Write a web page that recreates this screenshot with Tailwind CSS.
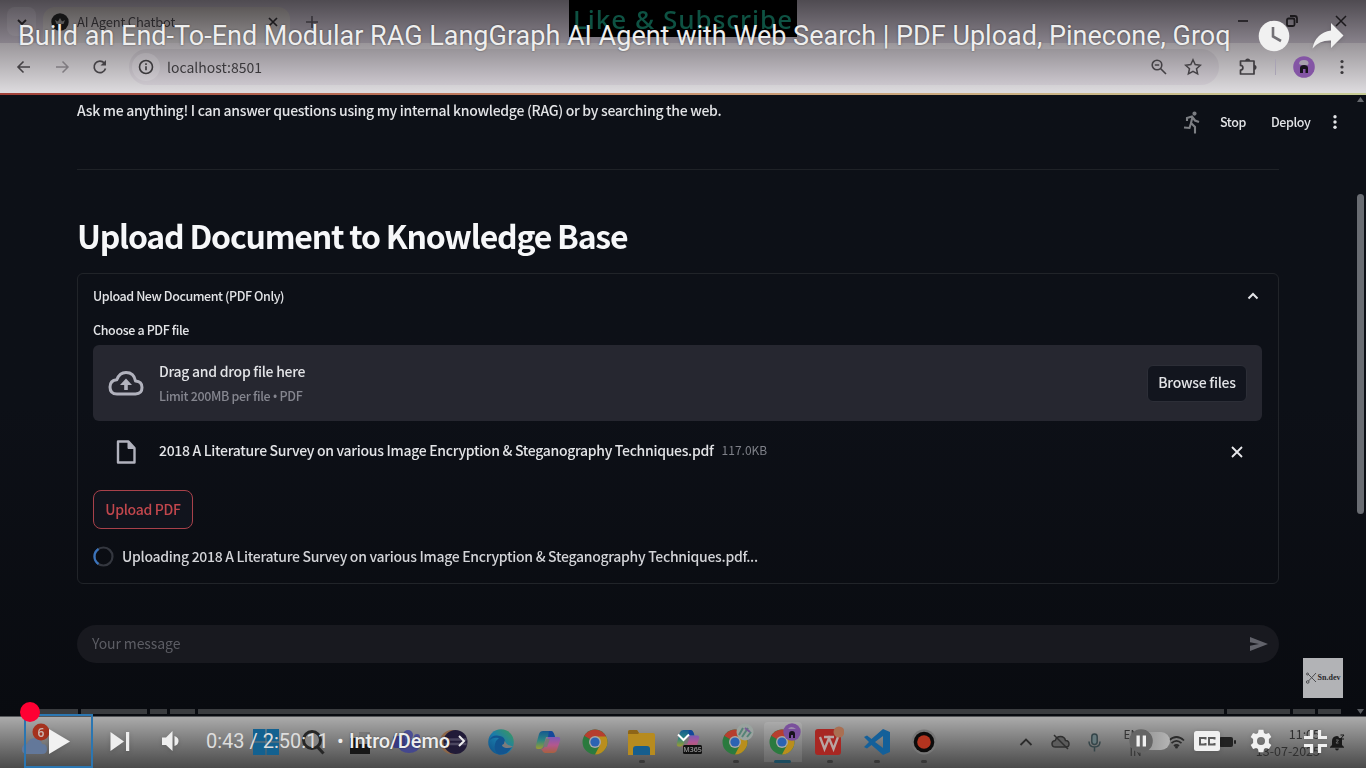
<!DOCTYPE html>
<html lang="en">
<head>
<meta charset="utf-8">
<title>Build an End-To-End Modular RAG LangGraph AI Agent</title>
<script src="https://cdn.jsdelivr.net/npm/@tailwindcss/browser@4"></script>
</head>
<body class="bg-black">
<svg width="0" height="0" class="absolute">
  <defs>
    <linearGradient id="cpl" x1="0" y1="0" x2="0" y2="1"><stop offset="0" stop-color="#15598f"/><stop offset=".5" stop-color="#2c8583"/><stop offset="1" stop-color="#9c9b31"/></linearGradient>
    <linearGradient id="cpr" x1="0" y1="0" x2="0" y2="1"><stop offset="0" stop-color="#7d5ab4"/><stop offset=".5" stop-color="#b3578f"/><stop offset="1" stop-color="#a8603f"/></linearGradient>
    <linearGradient id="edge" x1="0" y1="1" x2="1" y2="0"><stop offset="0" stop-color="#0e4c85"/><stop offset=".5" stop-color="#1a7cab"/><stop offset="1" stop-color="#3f9c55"/></linearGradient>
    <symbol id="chrome" viewBox="0 0 26 26">
      <circle cx="13" cy="13" r="12.500" fill="#2b7a3e"/>
      <path d="M13 13 2.200 6.800A12.500 12.500 0 0 1 23.800 6.800L23 9H13Z" fill="#b63e2f"/>
      <path d="M13 13V7.500H24.200A12.500 12.500 0 0 1 13 25.500L18 16Z" fill="#b98e1d"/>
      <circle cx="13" cy="13" r="6" fill="#a9a9a9"/><circle cx="13" cy="13" r="4.600" fill="#2b63b3"/>
    </symbol>
    <symbol id="copilot" viewBox="0 0 26 24">
      <path d="M8 1h8q2 0 3 3l1 3h-5l-4 0-3 10q-1 2-3 2H3q-3 0-2-4L4 4q1-3 4-3Z" fill="url(#cpl)"/>
      <path d="M14 1h2q2 0 3 3l1 3h-7Z" fill="#14489b"/>
      <path d="M18 23h-8q-2 0-3-3l-1-1q3 0 4-3l3-9h10q3 0 2 4l-3 9q-1 3-4 3Z" fill="url(#cpr)"/>
      <path d="m11 9 4 0-3 8h-3Z" fill="#777"/>
    </symbol>
  </defs>
</svg>

<main class="relative h-[768px] w-[1366px] overflow-hidden bg-[#0b0e15] font-['Noto_Sans_CJK_SC',sans-serif]">

  <!-- Recorded desktop -->
  <div class="flex h-full flex-col blur-[0.4px]">

    <!-- Tab strip -->
    <div class="flex h-[43px] shrink-0 bg-linear-to-b from-[#4f4b51] to-[#88828b] pt-[7px]">
      <div class="ml-[7px] flex h-[29px] w-[29px] items-center justify-center rounded-lg bg-white/5">
        <svg class="h-3 w-3" viewBox="0 0 12 12" fill="none" stroke="#1b191c" stroke-width="1.800"><path d="m2 4 4 4 4-4"/></svg>
      </div>
      <div class="ml-[7px] flex h-9 w-[247px] items-center rounded-t-xl bg-linear-to-b from-[#5d5959] to-[#918e90] pb-1.5 pl-2">
        <svg class="h-[18px] w-[18px]" viewBox="0 0 18 18"><circle cx="9" cy="9" r="8.700" fill="#151516"/><path d="m4 7 3 1.500L9 5l2 3.500L14 7l-1.500 4h-7Z" fill="#5a5858"/></svg>
        <span class="ml-[8px] w-[170px] whitespace-nowrap text-[13px] leading-5 tracking-[-0.2px] text-[#29272a]">AI Agent Chatbot</span>
        <svg class="ml-5 h-3 w-3" viewBox="0 0 12 12" fill="none" stroke="#1b191c" stroke-width="1.700"><path d="m2 2 8 8M10 2l-8 8"/></svg>
      </div>
      <svg class="mt-2 ml-[15px] h-[14px] w-[14px]" viewBox="0 0 14 14" fill="none" stroke="#37343a" stroke-width="1.600"><path d="M7 1v12M1 7h12"/></svg>
      <div class="-mt-[7px] ml-[250px] flex h-[37px] w-[228px] items-center justify-center bg-black font-['Noto_Sans',sans-serif] text-[26px] leading-9 font-medium tracking-[1px] whitespace-nowrap text-[#0e5243]">Like &amp; Subscribe</div>
      <div class="ml-auto flex h-7 items-center gap-[37px] pr-[19px]">
        <svg class="h-3 w-3" viewBox="0 0 12 12" stroke="#1b191c" stroke-width="1.600"><path d="M1 6h10"/></svg>
        <svg class="h-3 w-3" viewBox="0 0 12 12" fill="none" stroke="#1b191c" stroke-width="1.800"><rect x="1" y="3.500" width="7.500" height="7.500" rx="1.500"/><path d="M4 1h4.500q2.500 0 2.500 2.500V8"/></svg>
        <svg class="h-3 w-3" viewBox="0 0 12 12" fill="none" stroke="#1b191c" stroke-width="1.500"><path d="m1 1 10 10M11 1 1 11"/></svg>
      </div>
    </div>

    <!-- Address bar -->
    <div class="flex h-[50px] shrink-0 items-center bg-linear-to-b from-[#9a969a] to-[#dedcdf] pb-[2px] pl-[16px] text-[#3a383b]">
      <svg class="h-4 w-4" viewBox="0 0 16 16" fill="none" stroke="#444145" stroke-width="1.600"><path d="M14 8H2M7.500 2.500 2 8l5.500 5.500"/></svg>
      <svg class="ml-[22px] h-4 w-4" viewBox="0 0 16 16" fill="none" stroke="#7f7b80" stroke-width="1.500"><path d="M2 8h12M8.500 2.500 14 8l-5.500 5.500"/></svg>
      <svg class="ml-[22px] h-4 w-4" viewBox="0 0 16 16" fill="none" stroke="#444145" stroke-width="1.700"><path d="M13.500 9.500A5.800 5.800 0 1 1 12.300 4"/><path d="M14 1v5.500H8.500Z" fill="#444145" stroke="none"/></svg>
      <div class="ml-[21px] flex h-9 w-[1090px] items-center rounded-full bg-linear-to-b from-[#989499] to-[#cbc6cd] pl-[3px]">
        <div class="flex h-7 w-7 items-center justify-center rounded-full bg-white/12">
          <svg class="h-4 w-4" viewBox="0 0 16 16" fill="none" stroke="#3a383b" stroke-width="1.600"><circle cx="8" cy="8" r="6.500"/><path d="M8 7.200v4M8 4.300v1.700"/></svg>
        </div>
        <span class="ml-[7px] text-[14px] leading-5">localhost:8501</span>
        <svg class="ml-auto h-[18px] w-[18px]" viewBox="0 0 18 18" fill="none" stroke="#444145" stroke-width="1.600"><circle cx="7" cy="7" r="4.800"/><path d="m10.500 10.500 5.500 5.500M4.800 7h4.400"/></svg>
        <svg class="mr-[17px] ml-[16px] h-[18px] w-[18px]" viewBox="0 0 18 18" fill="none" stroke="#444145" stroke-width="1.500"><path d="m9 1.800 2.200 4.800 5.200.6-3.900 3.500 1.100 5.200L9 13.300l-4.600 2.600 1.100-5.200-3.900-3.500 5.200-.6Z"/></svg>
      </div>
      <svg class="ml-[19px] h-5 w-5" viewBox="0 0 20 20" fill="none" stroke="#3f3c40" stroke-width="1.700" stroke-linejoin="round"><path d="M2.500 4H16v13H2.500v-4c3.200 0 3.200-4.600 0-4.600Z"/><path d="M8 4a1.700 1.700 0 0 1 3.400 0M16 8.500a1.700 1.700 0 0 1 0 3.400" fill="#3f3c40"/></svg>
      <div class="ml-[17px] h-4 w-px bg-[#a9a3b4]"></div>
      <svg class="ml-[17px] h-[22px] w-[22px]" viewBox="0 0 22 22"><circle cx="11" cy="11" r="10.800" fill="#8455a5"/><path d="M6 8q0-4 5-4t4.500 4q-1 2-4.500 1.500T6 8Z" fill="#a7a0ad"/><path d="M7 16v-4q0-3 4-3t4 3v5h-2.500v-4h-2.500v4H7Z" fill="#17131c"/></svg>
      <svg class="ml-[19px] h-4 w-4" viewBox="0 0 16 16" fill="#3a383b"><circle cx="8" cy="2.500" r="1.600"/><circle cx="8" cy="8" r="1.600"/><circle cx="8" cy="13.500" r="1.600"/></svg>
    </div>
    <div class="h-[2px] shrink-0 bg-linear-to-r from-[#a04038] via-[#c99370] to-[#c8cd96]"></div>

    <!-- Application page -->
    <div class="flex h-[621px] shrink-0 bg-linear-to-b from-[#0d1017] via-[#0d1017] to-[#090b10]">
      <div class="ml-[77px] w-[1202px] shrink-0 text-[#e3e4e7]">
        <div class="flex h-[75px] justify-between border-b border-[#1f2227]">
          <p class="pt-[4px] text-[14px] leading-[22px] font-medium tracking-[-0.29px] whitespace-nowrap">Ask me anything! I can answer questions using my internal knowledge (RAG) or by searching the web.</p>
        </div>
        <h1 class="mt-[41px] h-[48px] text-[32px] leading-[48px] font-bold tracking-[-1.22px] whitespace-nowrap text-[#f6f7f9]">Upload Document to Knowledge Base</h1>

        <section class="mt-[14px] h-[311px] rounded-md border border-[#212429] pr-[16px] pl-[15px]">
          <div class="flex h-[43px] items-center justify-between pr-[3px]">
            <span class="text-[12.500px] leading-5 font-medium tracking-[-0.43px]">Upload New Document (PDF Only)</span>
            <svg class="h-[12px] w-[12px]" viewBox="0 0 12 12" fill="none" stroke="#e3e4e7" stroke-width="2"><path d="m1.500 8.500 4.500-4.500 4.500 4.500"/></svg>
          </div>
          <div class="h-[28px] text-[12.500px] leading-[25px] font-medium tracking-[-0.38px]">Choose a PDF file</div>
          <div class="flex h-[76px] items-center rounded-md bg-[#262730] pr-[15px] pl-[15px]">
            <svg class="h-[28px] w-[36px]" viewBox="0 0 36 28" fill="none" stroke="#b1b2bd" stroke-width="3" stroke-linejoin="round"><path d="M9 25q-7 0-7-7 0-6.500 6.800-7.200Q11.500 3.500 18 3.500q8 0 9.500 8.500 6.500.3 6.500 6.500T27.500 25Z"/><path d="m18 9.500 6 6.500h-4.200v5h-3.600v-5H12Z" fill="#b1b2bd" stroke="none"/></svg>
            <div class="ml-[15px] pt-[2px]">
              <div class="text-[14px] leading-[24px] font-medium tracking-[-0.27px]">Drag and drop file here</div>
              <div class="text-[12.500px] leading-[25px] font-medium tracking-[-0.35px] text-[#85868f]">Limit 200MB per file <span class="font-['Noto_Sans',sans-serif]">•</span> PDF</div>
            </div>
            <div class="ml-auto flex h-[37px] w-[100px] items-center justify-center rounded-md border border-[#2c2e37] bg-[#12151e] pb-[2px] text-[14px] font-medium tracking-[-0.25px]">Browse files</div>
          </div>
          <div class="flex h-[62px] items-center pr-[18px] pl-[23px]">
            <svg class="h-[24px] w-[20px]" viewBox="0 0 20 24" fill="none" stroke="#b1b2bd" stroke-width="2.400" stroke-linejoin="round"><path d="M2 1.500h10.500L18.500 8v14.500H2Z"/><path d="M12 2v6.500h6.500Z" fill="#b1b2bd" stroke-width="1"/></svg>
            <span class="mb-[4px] ml-[23px] text-[14px] leading-6 font-medium tracking-[-0.3px] whitespace-nowrap">2018 A Literature Survey on various Image Encryption &amp; Steganography Techniques.pdf</span>
            <span class="mb-[4px] ml-2 text-[12px] leading-6 text-[#7e8088]">117.0KB</span>
            <svg class="ml-auto h-[14px] w-[14px]" viewBox="0 0 14 14" fill="none" stroke="#e8e9ec" stroke-width="1.800"><path d="m2 2 10 10M12 2 2 12"/></svg>
          </div>
          <div class="mt-[7px] flex h-[39px] w-[100px] items-center justify-center rounded-lg border border-[#a8414a] bg-[#11141d] pb-px text-[14px] font-medium tracking-[-0.3px] text-[#c2474d]">Upload PDF</div>
          <div class="mt-[15px] flex h-6 items-center">
            <svg class="h-[21px] w-[21px]" viewBox="0 0 21 21" fill="none" stroke-width="2.200"><circle cx="10.500" cy="10.500" r="9" stroke="#34373f"/><path d="M5.500 3A9 9 0 0 0 5.500 18" stroke="#3a74bd"/></svg>
            <span class="mb-px ml-[8px] text-[14px] leading-6 font-medium tracking-[-0.29px] whitespace-nowrap text-[#d3d4d8]">Uploading 2018 A Literature Survey on various Image Encryption &amp; Steganography Techniques.pdf...</span>
          </div>
        </section>

        <div class="mt-[41px] flex h-[38px] items-center justify-between rounded-full bg-[#18191f] pr-[11px] pl-[15px]">
          <span class="pb-[2px] text-[14px] tracking-[-0.1px] text-[#5d5e65]">Your message</span>
          <svg class="h-[14px] w-[18px]" viewBox="0 0 18 14" fill="#62636b"><path d="M0 0 18 7 0 14V8.800L9 7 0 5.200Z"/></svg>
        </div>
      </div>
      <!-- Run status and page scrollbar -->
      <div class="-ml-[96px] flex h-[54px] w-[162px] shrink-0 items-center text-[12.500px] font-medium tracking-[-0.4px] text-[#e3e4e7]">
        <svg class="h-[23px] w-[18px]" viewBox="0 0 18 23" fill="none" stroke="#7d7f84" stroke-width="2.100"><circle cx="11.500" cy="2.600" r="1.500" fill="#7d7f84" stroke-width="1.200"/><path d="M4 10V7l5-1.500 3 4 4 1.500M9.500 6 8 12l4 4v6.500M8 12l-1.500 5L1 16.500"/></svg>
        <span class="ml-[19px]">Stop</span>
        <span class="ml-[25px]">Deploy</span>
        <svg class="ml-[17px] h-4 w-4 shrink-0" viewBox="0 0 16 16" fill="#e3e4e7"><circle cx="8" cy="2.800" r="1.700"/><circle cx="8" cy="8" r="1.700"/><circle cx="8" cy="13.200" r="1.700"/></svg>
      </div>
      <div class="mr-px ml-auto flex w-[10px] shrink-0 flex-col items-center">
        <svg class="mt-[2px] h-[5px] w-[7px] shrink-0" viewBox="0 0 7 5"><path d="m3.500 0 3.500 5H0Z" fill="#65686d"/></svg>
        <div class="mt-[92px] h-[320px] w-[7px] shrink-0 rounded-full bg-[#696c72]"></div>
        <svg class="mt-auto mb-[2px] h-[5px] w-[7px] shrink-0" viewBox="0 0 7 5"><path d="M0 0h7L3.500 5Z" fill="#5a5d62"/></svg>
      </div>
    </div>

    <!-- Windows taskbar -->
    <div class="flex h-[52px] shrink-0 border-t border-[#55575a] bg-linear-to-b from-[#ababab] to-[#4a4a4a]">
      <div class="flex w-[242px] shrink-0">
        <svg class="mt-[5px] ml-[21px] h-[38px] w-[32px]" viewBox="0 0 32 38"><path d="M5 32q-5-1-4-6 1-4 5-4 2-6 8-6 6 1 7 6 5 0 5 5t-5 5Z" fill="#63789a"/><circle cx="20" cy="10" r="8.500" fill="#a5321e"/><text x="20" y="14.500" text-anchor="middle" font-family="Noto Sans" font-size="12" font-weight="600" fill="#c9b3ad">6</text></svg>
      </div>
      <div class="flex h-[50px] items-center">
        <div class="flex w-[47px] justify-center"><svg class="h-[26px] w-[26px]" viewBox="0 0 26 26" fill="#136190"><path d="M0 0h12.500v12.500H0ZM13.500 0H26v12.500H13.500ZM0 13.500h12.500V26H0ZM13.500 13.500H26V26H13.500Z"/></svg></div>
        <div class="flex w-[47px] justify-center"><svg class="h-[25px] w-[24px]" viewBox="0 0 24 25" fill="none" stroke="#262626" stroke-width="3"><circle cx="11" cy="10" r="8.500" fill="#858585"/><path d="m16.500 17 6 6.500"/></svg></div>
        <div class="flex w-[47px] justify-center"><svg class="h-[24px] w-[20px]" viewBox="0 0 20 24"><path d="M0 8h20v16H0Z" fill="#171717"/><path d="M9 2h11v12H9Z" fill="#777"/></svg></div>
        <div class="flex w-[47px] justify-center"><svg class="h-[24px] w-[28px]" viewBox="0 0 28 24"><circle cx="15" cy="5" r="5" fill="#4c4f96"/><circle cx="24" cy="7" r="3" fill="#4c4f96"/><path d="M5 9h22v7q-2 7-11 7T5 16Z" fill="#44478e"/><rect x="0" y="6" width="12" height="12" rx="2" fill="#383b85"/></svg></div>
        <div class="flex w-[47px] justify-center"><svg class="h-[26px] w-[28px]" viewBox="0 0 28 26"><circle cx="12" cy="13" r="12" fill="#8d6748"/><circle cx="15.500" cy="13" r="12" fill="#211b38"/><path d="M4.500 10.500h22M4.500 15h22" stroke="#4b465f" stroke-width="2.500"/></svg></div>
        <div class="flex w-[47px] justify-center"><svg class="h-[26px] w-[26px]" viewBox="0 0 26 26"><circle cx="13" cy="13" r="12.800" fill="url(#edge)"/><path d="M1 12Q4 5 12 7q5 1 5 6-1 2-2 3 1 3 5 2.500l4-1Q20 26 11 25.500 5 22 7 15q1-4 4-6Q4 8 1 12Z" fill="#125590"/><path d="M25 17.500q-3 2-7 1.500-4-1-4-3 3-1 2.500-4.500Q19 17 25 17.500Z" fill="#7c7c7c"/></svg></div>
        <div class="flex w-[47px] justify-center"><svg class="h-[24px] w-[26px]"><use href="#copilot"/></svg></div>
        <div class="flex w-[47px] justify-center"><svg class="h-[26px] w-[26px]"><use href="#chrome"/></svg></div>
        <div class="flex w-[47px] flex-col items-center pt-[8px]"><svg class="h-[25px] w-[27px]" viewBox="0 0 27 25"><path d="M0 2q0-2 2-2h7l2 3h14q2 0 2 2v20H0Z" fill="#b78b1f"/><path d="M0 2q0-2 2-2h7l2 3-1 1H0Z" fill="#8e6517"/><path d="M5 25v-6q0-3 3-3h11q3 0 3 3v6Z" fill="#165e8e"/></svg><span class="mt-[5px] h-[3px] w-[6px] rounded-full bg-[#383838]"></span></div>
        <div class="flex w-[47px] justify-center"><svg class="h-[26px] w-[28px]" viewBox="0 0 28 26"><use href="#copilot" x="0" y="0" width="26" height="22"/><rect x="8" y="16" width="19" height="9" rx="1.500" fill="#111"/><text x="17.500" y="23.200" text-anchor="middle" font-family="Noto Sans" font-size="7" font-weight="600" fill="#8e8e8e">M365</text></svg></div>
        <div class="flex w-[47px] flex-col items-center pt-[2px] pl-[4px]"><svg class="h-[32px] w-[32px]" viewBox="0 0 32 32"><use href="#chrome" x="0" y="6" width="26" height="26"/><circle cx="23" cy="9" r="8.500" fill="#9aa39f"/><path d="m17 12 4-7M20 14l6-9M25 14l4-5" stroke="#558377" stroke-width="2"/><path d="m23 5 5 4" stroke="#765a95" stroke-width="2"/></svg><span class="mt-[5px] mr-[4px] h-[3px] w-[6px] rounded-full bg-[#383838]"></span></div>
        <div class="flex w-[47px] flex-col items-center"><div class="flex h-[40px] w-[38px] flex-col items-center rounded-t bg-white/10 pt-[1px]"><svg class="ml-[5px] h-[32px] w-[32px] shrink-0" viewBox="0 0 32 32"><use href="#chrome" x="0" y="6" width="26" height="26"/><circle cx="23" cy="9" r="8.700" fill="#7a509c"/><path d="M20 15v-4q0-3 3-3t3 3v4h-2v-3h-2v3Z" fill="#17131c"/><path d="M19 6q3-4 8 0Z" fill="#9c8cab"/></svg><span class="mt-[5px] h-[3px] w-[17px] shrink-0 rounded-full bg-[#1d4c5f]"></span></div></div>
        <div class="flex w-[47px] flex-col items-center pt-[5px]"><svg class="h-[29px] w-[29px]" viewBox="0 0 29 29"><rect x="0" y="3" width="26" height="26" rx="3" fill="#a82723"/><path d="m5 11 4.500 12L14 12l4.500 11L23 11M9 11h10" fill="none" stroke="#b9a5a3" stroke-width="2.300"/><circle cx="24" cy="6" r="5.500" fill="#a96f52"/></svg><span class="mt-[5px] h-[3px] w-[6px] rounded-full bg-[#383838]"></span></div>
        <div class="flex w-[47px] flex-col items-center pt-[8px]"><svg class="h-[26px] w-[26px]" viewBox="0 0 26 26"><path d="M19 0 7.500 10 3 6.500 0 8l5 5-5 5 3 1.500L7.500 16 19 26l7-3V3Zm0 7v12l-8-6Z" fill="#14609a"/></svg><span class="mt-[5px] h-[3px] w-[6px] rounded-full bg-[#383838]"></span></div>
        <div class="flex w-[47px] flex-col items-center pt-[8px]"><svg class="h-[26px] w-[26px]" viewBox="0 0 26 26"><circle cx="13" cy="13" r="12.500" fill="#777"/><circle cx="13" cy="13" r="10.300" fill="#0c0b0b"/><circle cx="13" cy="13" r="6.800" fill="#b3341f"/></svg><span class="mt-[5px] h-[3px] w-[6px] rounded-full bg-[#383838]"></span></div>
      </div>
      <div class="ml-auto flex h-[50px] shrink-0 items-center pr-[21px]">
        <svg class="h-3 w-[14px]" viewBox="0 0 14 12" fill="none" stroke="#2c2c2c" stroke-width="1.800"><path d="m1.500 9 5.500-5.500L12.500 9"/></svg>
        <svg class="ml-[18px] h-[16px] w-[19px]" viewBox="0 0 19 16" fill="none" stroke="#2f2f2f" stroke-width="1.500"><path d="M4.500 13q-3.500 0-3.500-3.300 0-3 3.300-3.300Q5.500 2.500 9.500 2.500t5 4Q18 6.700 18 10t-3.500 3Z" fill="#5c5c5c"/><path d="m3 1 14 14"/></svg>
        <svg class="ml-[18px] h-[19px] w-[13px]" viewBox="0 0 13 19" fill="none" stroke="#354549" stroke-width="1.500"><rect x="3.800" y="1" width="5.400" height="10.500" rx="2.700" fill="#65787c"/><path d="M1 8.500q0 5.500 5.500 5.500T12 8.500M6.500 14v4.500"/></svg>
        <div class="ml-[21px] flex h-[34px] w-[27px] flex-col items-center text-[12px] leading-[17px] text-[#333]"><span>ENG</span><span>IN</span></div>
        <svg class="ml-[19px] h-[14px] w-[17px]" viewBox="0 0 17 14" fill="none" stroke="#2b2b2b" stroke-width="1.700"><path d="M1 5.500q7.500-7 15 0M3.500 8.200q5-4.800 10 0M6 11q2.500-2.300 5 0"/><circle cx="8.500" cy="12" r="1.500" fill="#2b2b2b" stroke="none"/></svg>
        <svg class="ml-[34px] h-[10px] w-[17px]" viewBox="0 0 17 10" fill="#222"><rect x="0" y="0" width="14" height="10" rx="2"/><rect x="15" y="3" width="2" height="4" rx="1"/></svg>
        <div class="mb-px ml-[16px] flex w-[68px] flex-col text-right text-[12.500px] leading-[17px] text-[#303030]"><span>11:05</span><span>13-07-2025</span></div>
        <svg class="ml-[9px] h-[17px] w-[16px]" viewBox="0 0 16 17" fill="#191919"><path d="M1 13 3 11V7q0-4.500 5-5 2 0 2 2h3v7l2 2v.8H1ZM6 14.500h4q-.5 2-2 2t-2-2Z"/><path d="M7 6h2.500L7 9h2.500" fill="none" stroke="#6a6a6a"/><path d="M11.500 1H15l-3.500 4H15" fill="none" stroke="#191919"/></svg>
      </div>
    </div>
  </div>

  <!-- Player overlay -->
  <div class="absolute inset-0 flex flex-col font-[Roboto,sans-serif] text-[#eee]">
    <div class="flex h-[72px] items-center pl-[18px]">
      <h2 class="w-[1240px] text-[27px] leading-8 whitespace-nowrap [text-shadow:0_0_2px_rgba(0,0,0,.5)]">Build an End-To-End Modular RAG LangGraph AI Agent with Web Search | PDF Upload, Pinecone, Groq</h2>
      <svg class="h-[32px] w-[32px] shrink-0" viewBox="0 0 32 32"><circle cx="16" cy="16" r="15.300" fill="#f1f1f1"/><path d="M15 7v9.500l8 4.500" fill="none" stroke="#727075" stroke-width="2.600"/></svg>
      <svg class="ml-[22px] h-[26px] w-[32px] shrink-0 drop-shadow-sm" viewBox="0 0 32 26"><path d="m19 0 12.500 12.500L19 25v-7.500Q7.500 17 .5 25.500 3.500 10 19 7.500Z" fill="#f1f1f1"/></svg>
    </div>
    <div class="mt-auto mr-[23px] mb-[11px] ml-auto flex h-10 w-10 items-center justify-center bg-[#b2b3b6]">
      <svg class="h-[12px] w-[11px]" viewBox="0 0 11 12" fill="none" stroke="#4c4c4f" stroke-width="1"><path d="m2 2 8 8M10 1 2.500 9"/><circle cx="1.700" cy="10" r="1.300"/><circle cx="1.500" cy="2" r="1"/></svg>
      <span class="ml-px font-['Liberation_Serif',serif] text-[8px] leading-3 font-bold text-[#29292c]">Sn.dev</span>
    </div>
    <div class="relative flex h-[5px] gap-[3px] pr-[25px] pl-[24px]">
      <div class="w-[54px] bg-[#3a3c3f]"></div><div class="w-[66px] bg-[#3a3c3f]"></div><div class="w-[17px] bg-[#3a3c3f]"></div><div class="w-[25px] bg-[#3a3c3f]"></div><div class="w-[1026px] bg-[#3a3c3f]"></div><div class="w-[63px] bg-[#3a3c3f]"></div><div class="w-[22px] bg-[#3a3c3f]"></div><div class="w-[23px] bg-[#3a3c3f]"></div>
      <span class="absolute top-[-7px] left-[19.500px] z-10 h-5 w-5 rounded-full bg-[#ff0033]"></span>
    </div>
    <div class="flex h-[54px] items-center pl-[24px]">
      <div class="flex h-[54px] w-[69px] items-center border-2 border-[#2b76b1] pl-[23px]"><svg class="h-[25px] w-[21px] drop-shadow-sm" viewBox="0 0 21 25"><path d="m0 0 21 12.500L0 25Z" fill="#f1f1f1"/></svg></div>
      <svg class="ml-[17px] h-[19px] w-[20px] drop-shadow-sm" viewBox="0 0 20 19" fill="#eee"><path d="m.5 0 13.500 9.500L.5 19ZM16 0h3.200v19H16Z"/></svg>
      <svg class="ml-[31px] h-[20px] w-[18px] drop-shadow-sm" viewBox="0 0 18 20" fill="#eee"><path d="M1 6.500h4L11.500 0v20L5 14H1ZM13.500 5q4.500 1.500 4 5.500-.5 3.500-4 4.500Z"/></svg>
      <span class="ml-[27px] w-[131px] text-[20px] leading-6 whitespace-nowrap text-[#ddd]">0:43 / 2:50:11</span>
      <span class="w-[12px] text-[20px] leading-6">•</span>
      <span class="w-[108px] text-[20px] leading-6 font-medium tracking-[-0.1px] whitespace-nowrap [text-shadow:0_0_2px_rgba(0,0,0,.5)]">Intro/Demo</span>
      <svg class="h-3 w-[9px]" viewBox="0 0 9 12" fill="none" stroke="#eee" stroke-width="2"><path d="m2 1 5 5-5 5"/></svg>
      <svg class="mb-[7px] ml-[211px] h-[9px] w-[13px]" viewBox="0 0 13 9" fill="none" stroke="#fff" stroke-width="2"><path d="m1 1.500 5.500 5.500L12 1.500"/></svg>
      <div class="ml-auto flex items-center pr-[39px]">
        <div class="flex h-[18px] w-[41px] items-center rounded-full bg-linear-to-r from-[#858585] to-[#b4b4b4]"><svg class="h-6 w-6 shrink-0" viewBox="0 0 24 24"><circle cx="12" cy="12" r="11.800" fill="#656565"/><path d="M7.500 6.500h3.300v11H7.500ZM13.700 6.500H17v11h-3.300Z" fill="#f1f1f1"/></svg></div>
        <svg class="ml-[24px] h-[20px] w-[26px] drop-shadow-sm" viewBox="0 0 26 20"><rect width="26" height="20" rx="2.500" fill="#f1f1f1"/><path d="M11.500 8.500V7H6v6.500h5.500V12M20.500 8.500V7H15v6.500h5.500V12" fill="none" stroke="#5d5d5d" stroke-width="2"/></svg>
        <svg class="ml-[29px] h-[24px] w-[24px] drop-shadow-sm" viewBox="0 0 24 24"><path fill="#f1f1f1" fill-rule="evenodd" d="M9.600.8h4.800l.6 3.100 1.900 1.100 3-1.100 2.400 4.200-2.400 2v3.800l2.400 2-2.400 4.200-3-1.100-1.900 1.100-.6 3.100H9.600L9 20.100 7.100 19l-3 1.100-2.400-4.200 2.400-2v-3.800l-2.400-2 2.400-4.200 3 1.100L9 3.900ZM12 8a4 4 0 1 0 0 8 4 4 0 0 0 0-8Z"/></svg>
        <svg class="ml-[31px] h-[23px] w-[23px] drop-shadow-sm" viewBox="0 0 23 23" fill="none" stroke="#f1f1f1" stroke-width="3.200"><path d="M0 7.500h7.500V0M15.500 0v7.500H23M0 15.500h7.500V23M15.500 23v-7.500H23"/></svg>
      </div>
    </div>
  </div>
</main>
</body>
</html>
